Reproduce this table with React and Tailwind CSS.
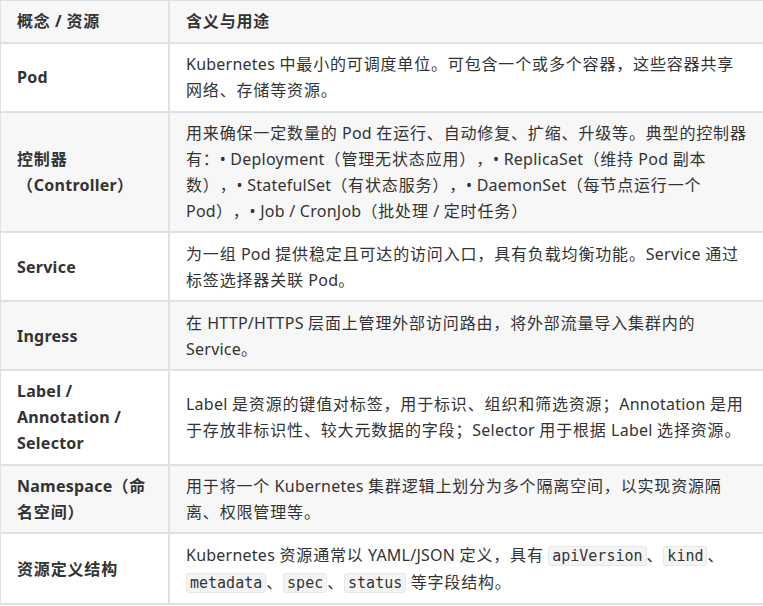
import React from 'react';

const rows = [
  {
    name: 'Pod',
    desc: 'Kubernetes 中最小的可调度单位。可包含一个或多个容器，这些容器共享网络、存储等资源。',
  },
  {
    name: '控制器（Controller）',
    desc: '用来确保一定数量的 Pod 在运行、自动修复、扩缩、升级等。典型的控制器有：• Deployment（管理无状态应用），• ReplicaSet（维持 Pod 副本数），• StatefulSet（有状态服务），• DaemonSet（每节点运行一个 Pod），• Job / CronJob（批处理 / 定时任务）',
  },
  {
    name: 'Service',
    desc: '为一组 Pod 提供稳定且可达的访问入口，具有负载均衡功能。Service 通过标签选择器关联 Pod。',
  },
  {
    name: 'Ingress',
    desc: '在 HTTP/HTTPS 层面上管理外部访问路由，将外部流量导入集群内的 Service。',
  },
  {
    name: 'Label / Annotation / Selector',
    desc: 'Label 是资源的键值对标签，用于标识、组织和筛选资源；Annotation 是用于存放非标识性、较大元数据的字段；Selector 用于根据 Label 选择资源。',
  },
  {
    name: 'Namespace（命名空间）',
    desc: '用于将一个 Kubernetes 集群逻辑上划分为多个隔离空间，以实现资源隔离、权限管理等。',
  },
  {
    name: '资源定义结构',
    code: true,
  },
];

// CJK runs are a bit wider than latin ones in the screenshot
const CJK = /([\u3000-\u303f\u4e00-\u9fff\uff00-\uffef]+)/;

function Txt({ children }) {
  return children.split(CJK).filter(Boolean).map((part, i) =>
    CJK.test(part) ? (
      <span key={i} className="tracking-[0.84px]">{part}</span>
    ) : (
      <span key={i} className="tracking-[0.24px]">{part}</span>
    )
  );
}

function Code({ children }) {
  return (
    <code className="bg-[#f3f4f4] border border-[#e8e8e8] rounded-[3px] px-[3px] text-[15px] tracking-normal text-[#333] font-['DejaVu_Sans_Mono',monospace]">
      {children}
    </code>
  );
}

function App() {
  return (
    <div className="w-[763px] h-[606px] overflow-hidden bg-white">
      <table className="-mt-px -ml-px w-[768px] border-collapse table-fixed text-[16px] leading-[26px] text-[#333] [text-spacing-trim:space-all] font-['Noto_Sans','Open_Sans','Noto_Sans_CJK_SC',sans-serif]">
        <colgroup>
          <col className="w-[169px]" />
          <col />
        </colgroup>
        <thead>
          <tr className="bg-[#f7f7f7]">
            <th className="border-2 border-[#dfe2e5] px-[16px] py-[7.4px] text-left font-bold"><Txt>概念 / 资源</Txt></th>
            <th className="border-2 border-[#dfe2e5] px-[16px] py-[7.4px] text-left font-bold"><Txt>含义与用途</Txt></th>
          </tr>
        </thead>
        <tbody>
          {rows.map((r, i) => (
            <tr key={i} className={i % 2 === 1 ? 'bg-[#f7f7f7]' : 'bg-white'}>
              <td className="border-2 border-[#dfe2e5] px-[16px] py-[7.4px] font-bold"><Txt>{r.name}</Txt></td>
              <td className="border-2 border-[#dfe2e5] px-[16px] py-[7.4px]">
                {r.code ? (
                  <>
                    <Txt>Kubernetes 资源通常以 YAML/JSON 定义，具有 </Txt><Code>apiVersion</Code><Txt>、</Txt><Code>kind</Code><Txt>、</Txt>
                    <Code>metadata</Code><Txt>、</Txt><Code>spec</Code><Txt>、</Txt><Code>status</Code><Txt> 等字段结构。</Txt>
                  </>
                ) : (
                  <Txt>{r.desc}</Txt>
                )}
              </td>
            </tr>
          ))}
        </tbody>
      </table>
    </div>
  );
}

export default App;
